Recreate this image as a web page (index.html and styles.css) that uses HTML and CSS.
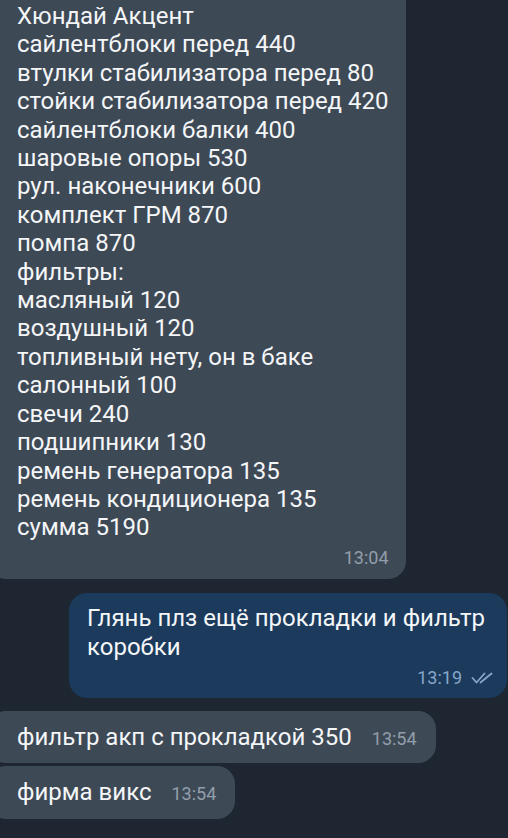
FILE: index.html
```html
<!DOCTYPE html>
<html>
<head>
  <meta name="viewport" content="width=device-width, initial-scale=1.0">
  <title>Чат</title>
  <link rel="stylesheet" href="styles.css">
</head>
<body>
  <div class="chat">
    <div class="msg in first">
      <div class="text">Хюндай Акцент
сайлентблоки перед 440
втулки стабилизатора перед 80
стойки стабилизатора перед 420
сайлентблоки балки 400
шаровые опоры 530
рул. наконечники 600
комплект ГРМ 870
помпа 870
фильтры:
масляный 120
воздушный 120
топливный нету, он в баке
салонный 100
свечи 240
подшипники 130
ремень генератора 135
ремень кондиционера 135
сумма 5190</div>
      <div class="meta">13:04</div>
    </div>

    <div class="msg out">
      <div class="text">Глянь плз ещё прокладки и фильтр
коробки</div>
      <div class="meta">13:19
        <svg class="ticks" width="22" height="12" viewBox="0 0 22 12">
          <path d="M1.5 6 L5.5 10.5 L13.5 1.5" />
          <path d="M9.5 10.5 L20.5 1.5" />
        </svg>
      </div>
    </div>

    <div class="msg in short">
      <span class="text">фильтр акп с прокладкой 350</span>
      <span class="meta">13:54</span>
    </div>
    <div class="msg in short">
      <span class="text">фирма викс</span>
      <span class="meta">13:54</span>
    </div>
  </div>
</body>
</html>
```

FILE: styles.css
```css
html, body {
  margin: 0;
  height: 100%;
}
body {
  background-color: #1d2631;
  font-family: Roboto, "Noto Sans", sans-serif;
  color: #f4f6f8;
  overflow: hidden;
}
.chat {
  display: flex;
  flex-direction: column;
}
.msg {
  border-radius: 18px;
  box-sizing: border-box;
}
.msg .text {
  font-size: 24px;
  line-height: 28.4px;
  white-space: pre-line;
}
.msg .meta {
  font-size: 18px;
  line-height: 22px;
  color: #929eaa;
}
.in {
  background-color: #3e4956;
  align-self: flex-start;
  margin-left: -12px;
}
.first {
  margin-top: -30px;
  padding: 32px 17px 10px 29px;
}
.first .meta {
  text-align: right;
  margin-top: 5px;
}
.out {
  align-self: flex-end;
  width: 438px;
  margin: 14px 1px 0 0;
  background-color: #1b3a5c;
  padding: 11px 14px 9px 18px;
}
.out .text {
  line-height: 29px;
}
.out .meta {
  display: flex;
  justify-content: flex-end;
  align-items: center;
  gap: 9px;
  color: #86a6c8;
  margin-top: 5px;
}
.ticks path {
  fill: none;
  stroke: #86a6c8;
  stroke-width: 1.8;
  stroke-linecap: round;
  stroke-linejoin: round;
}
.short {
  display: flex;
  align-items: baseline;
  gap: 20px;
  padding: 12px 19px 12px 29px;
  margin-top: 3px;
}
.out + .short {
  margin-top: 13px;
}
```
